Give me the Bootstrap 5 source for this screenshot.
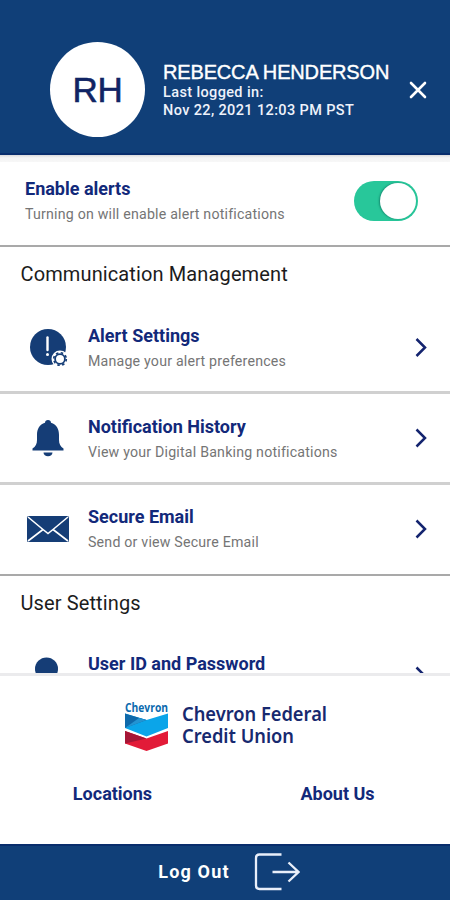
<!DOCTYPE html>
<html lang="en">
<head>
<meta charset="utf-8">
<meta name="viewport" content="width=device-width, initial-scale=1">
<title>Profile and settings</title>
<link href="https://cdn.jsdelivr.net/npm/bootstrap@5.3.0/dist/css/bootstrap.min.css" rel="stylesheet">
<style>
  :root { --navy: #103f78; --ink: #12297a; }
  body { font-family: Roboto, sans-serif; height: 900px; background: #fff; }
  .profile-bar { height: 155px; background: var(--navy); border-bottom: 2px solid #082d6c; padding: 26px 21px 0 50px; }
  .avatar { width: 95px; height: 95px; color: #102464; font: 35px/1 "Liberation Sans", sans-serif; letter-spacing: -.4px; -webkit-text-stroke: .6px #102464; }
  .who { margin-left: 18px; padding-top: 2px; font-weight: 500; font-size: 14.5px; line-height: 18px; letter-spacing: .37px; color: #eef2fb; }
  .who-name { font: 20px/22px "Liberation Sans", sans-serif; letter-spacing: -.16px; margin-bottom: 1px; -webkit-text-stroke: .4px #fff; color: #fff; }
  .strip { height: 7px; background: linear-gradient(#d9d9dc, #f4f4f4 40%, #f7f7f7); }
  .enable { height: 85px; border-bottom: 2px solid #a9a9a9; padding: 0 32px 6px 25px; }
  .item-title { font-weight: 700; font-size: 18px; line-height: 24px; color: var(--ink); }
  .item-note { font-size: 14.2px; line-height: 20px; letter-spacing: .2px; color: #757575; }
  .item .item-note { margin-top: 3px; }
  .enable .item-note { margin-top: 3px; }
  .switch-on { width: 64px; height: 40px; padding: 2px; background: #28c79a; }
  .knob { width: 36px; height: 36px; background: #fff; box-shadow: -1px 0 2px #148b70; }
  .group-title { font-size: 20px; line-height: 24px; letter-spacing: .12px; color: #1c1c1c; padding: 15px 0 0 20.5px; margin: 0; font-weight: 400; }
  .item { height: 91px; border-bottom: 3px solid #d0d0d0; padding-right: 22px; color: inherit; }
  .group-title + .item { margin-top: 17px; }
  .item-icon { width: 88px; padding-left: 26px; }
  .item-last { border-bottom: 2px solid #a9a9a9; padding-bottom: 2px; }
  .item-cut { align-items: flex-start; padding-top: 20px; }
  .item-cut > svg { margin-top: 13px; }
  .item-cut .item-icon { margin-top: 3px; }
  .scroller { height: 518px; }
  .brand-panel { height: 171px; border-top: 3px solid #ebebed; }
  .foot-link { color: var(--ink); font-weight: 700; font-size: 18px; line-height: 24px; }
  .logout { height: 56px; background: var(--navy); border-top: 2px solid #082d6c; font-weight: 700; font-size: 18px; letter-spacing: 1.15px; padding: 0 0 3px 8px; }
  svg { display: block; flex: none; }
</style>
<script src="https://cdn.jsdelivr.net/npm/bootstrap@5.3.0/dist/js/bootstrap.bundle.min.js"></script>
</head>
<body class="d-flex flex-column overflow-hidden">
<header class="profile-bar d-flex align-items-center flex-shrink-0">
  <div class="avatar rounded-circle bg-white d-flex align-items-center justify-content-center flex-shrink-0">RH</div>
  <div class="who text-nowrap">
    <div class="who-name">REBECCA HENDERSON</div>
    <div>Last logged in:</div>
    <div>Nov 22, 2021 12:03 PM PST</div>
  </div>
  <svg class="ms-auto" width="22" height="20" viewBox="0 0 22 20"><path d="M4 3 18 17M18 3 4 17" stroke="#fff" stroke-width="2.600" stroke-linecap="round"/></svg>
</header>
<main class="scroller overflow-hidden flex-shrink-0">
  <div class="strip"></div>
  <section class="enable d-flex align-items-center justify-content-between">
    <div>
      <div class="item-title">Enable alerts</div>
      <div class="item-note">Turning on will enable alert notifications</div>
    </div>
    <div class="switch-on rounded-pill d-flex justify-content-end" role="switch" aria-checked="true"><div class="knob rounded-circle"></div></div>
  </section>
  <h2 class="group-title">Communication Management</h2>
  <div class="item d-flex align-items-center">
    <div class="item-icon"><svg width="44" height="44" viewBox="0 0 44 44"><circle cx="22" cy="22" r="18" fill="#153d76"/><path d="M21.500 12.500V25" stroke="#fff" stroke-width="2.400" stroke-linecap="round"/><circle cx="21.500" cy="29.500" r="1.500" fill="#fff"/><circle cx="34" cy="34" r="8.500" fill="#fff"/><circle cx="34" cy="34" r="6.300" fill="none" stroke="#153d76" stroke-width="1.600" stroke-dasharray="2.500 2.448"/><circle cx="34" cy="34" r="4.900" fill="none" stroke="#153d76" stroke-width="1.800"/></svg></div>
    <div><div class="item-title">Alert Settings</div><div class="item-note">Manage your alert preferences</div></div>
    <svg class="ms-auto" width="14" height="22" viewBox="0 0 14 22"><path d="M2.500 3 11 11.500 2.500 20" fill="none" stroke="#14246f" stroke-width="2.500"/></svg>
  </div>
  <div class="item d-flex align-items-center">
    <div class="item-icon"><svg width="44" height="44" viewBox="0 0 44 44"><path d="M22 4a3 3 0 0 1 3 2.800C30.500 8.500 33 13 33 19v5c0 4 1.500 6.500 4.500 8.500v2H6.500v-2C9.500 30.500 11 28 11 24v-5c0-6 2.500-10.500 8-12.200A3 3 0 0 1 22 4Z" fill="#153d76"/><path d="M17.500 36.500h9a4.500 3.800 0 0 1-9 0Z" fill="#153d76"/></svg></div>
    <div><div class="item-title">Notification History</div><div class="item-note">View your Digital Banking notifications</div></div>
    <svg class="ms-auto" width="14" height="22" viewBox="0 0 14 22"><path d="M2.500 2.500 11 11 2.500 19.500" fill="none" stroke="#14246f" stroke-width="2.500"/></svg>
  </div>
  <div class="item item-last d-flex align-items-center">
    <div class="item-icon"><svg width="44" height="44" viewBox="0 0 44 44"><rect x="1" y="9" width="42" height="26" rx="1.500" fill="#153d76"/><path d="M2 10 17 22.500 22 26.500 27 22.500 42 10M2 34 17 22.500M42 34 27 22.500" fill="none" stroke="#fff" stroke-width="1.600"/></svg></div>
    <div><div class="item-title">Secure Email</div><div class="item-note">Send or view Secure Email</div></div>
    <svg class="ms-auto" width="14" height="22" viewBox="0 0 14 22"><path d="M2.500 2.500 11 11 2.500 19.500" fill="none" stroke="#14246f" stroke-width="2.500"/></svg>
  </div>
  <h2 class="group-title">User Settings</h2>
  <div class="item item-cut d-flex">
    <div class="item-icon"><svg width="44" height="44" viewBox="0 0 44 44"><circle cx="20.500" cy="14" r="11.500" fill="#153d76"/><path d="M2 44c0-12 8-17 18.500-17S39 32 39 44Z" fill="#153d76"/></svg></div>
    <div class="item-title">User ID and Password</div>
    <svg class="ms-auto" width="14" height="22" viewBox="0 0 14 22"><path d="M2.500 2.500 11 11 2.500 19.500" fill="none" stroke="#14246f" stroke-width="2.500"/></svg>
  </div>
</main>
<section class="brand-panel bg-white flex-shrink-0 pt-4">
  <div class="d-flex justify-content-center">
    <svg width="206" height="54" viewBox="0 0 206 54">
      <text x="3" y="12" font-family="Open Sans, sans-serif" font-weight="700" font-size="11.500" textLength="43" lengthAdjust="spacingAndGlyphs" fill="#0b6aae">Chevron</text>
      <path d="M3 13.500 24.500 20 46 13.500V28L24.500 36.500 3 28Z" fill="#0ba5e9"/>
      <path d="M3 13.500 24.500 20 3 28Z" fill="#0e69aa"/>
      <path d="M3 28 17 18 24.500 20Z" fill="#2394d2"/>
      <path d="M3 31 24.500 38.500 46 31V43.500L24.500 51 3 43.500Z" fill="#e21b38"/>
      <path d="M3 31 24.500 38.500 3 43.500Z" fill="#a61636"/>
      <g font-family="Noto Sans, sans-serif" font-weight="600" font-size="19.500" fill="#17296f">
        <text x="60" y="21" textLength="145" lengthAdjust="spacingAndGlyphs">Chevron Federal</text>
        <text x="60" y="43" textLength="112" lengthAdjust="spacingAndGlyphs">Credit Union</text>
      </g>
    </svg>
  </div>
  <div class="row g-0 text-center mt-4 pt-1">
    <div class="col-6"><span class="foot-link">Locations</span></div>
    <div class="col-6"><span class="foot-link">About Us</span></div>
  </div>
</section>
<footer class="logout text-white d-flex align-items-center justify-content-center flex-shrink-0">
  <span>Log Out</span>
  <svg class="ms-4" width="46" height="40" viewBox="0 0 46 40"><path d="M27.500 2.500H5.500Q2 2.500 2 6V33.500Q2 37 5.500 37H27.500M18.500 20H44.500M34.500 10.500 44.500 20 34.500 29.500" fill="none" stroke="#e9effa" stroke-width="2.300"/></svg>
</footer>
</body>
</html>
